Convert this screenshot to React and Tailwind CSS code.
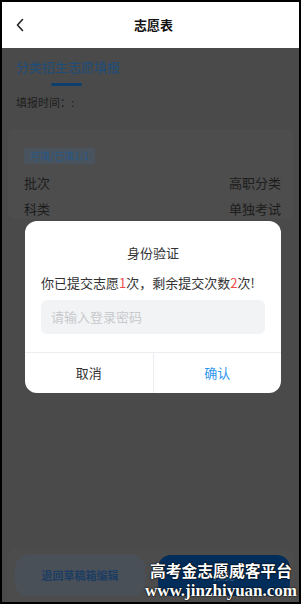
import React from 'react';

const cjk = "font-['Noto_Sans_CJK_SC','Noto_Sans',sans-serif]";

const Header = () => (
  <div className="h-[46px] shrink-0 bg-white flex items-center relative">
    <div className="w-[40px] flex items-center pl-[13px]">
      <svg width="10" height="14" viewBox="0 0 10 14" fill="none">
        <path d="M7.5 1.5 L2.5 7 L7.5 12.5" stroke="#222" strokeWidth="1.6" strokeLinecap="round" strokeLinejoin="round" />
      </svg>
    </div>
    <div className="flex-1 text-center text-[13px] font-bold text-[#111] pr-[34px]">志愿表</div>
  </div>
);

const InfoRow = ({ label, value, className }) => (
  <div className={`flex justify-between text-[13px] leading-[18px] text-[#1c1c1c] ${className || ''}`}>
    <span>{label}</span>
    <span>{value}</span>
  </div>
);

const Dialog = () => (
  <div className="absolute left-[23px] top-[173px] w-[256px] h-[172px] bg-white rounded-[12px] overflow-hidden flex flex-col">
    <div className="pt-[23px] text-center text-[13px] leading-[18px] text-[#323233]">身份验证</div>
    <div className="mt-[12px] px-[16px] text-[13px] leading-[18px] text-[#323233] whitespace-nowrap">
      你已提交志愿<span className="text-[#ee4b4b]">1</span>次，剩余提交次数<span className="text-[#ee4b4b]">2</span>次!
    </div>
    <div className="mt-[8px] mx-[16px] h-[34px] rounded-[6px] bg-[#f2f3f5] flex items-center pl-[10px] text-[13px] text-[#c8c9cc]">
      请输入登录密码
    </div>
    <div className="mt-[18px] border-t border-[#ebedf0] flex flex-1">
      <div className="flex-1 flex items-center justify-center text-[13px] text-[#323233] border-r border-[#ebedf0]">取消</div>
      <div className="flex-1 flex items-center justify-center text-[13px] text-[#2d95ee]">确认</div>
    </div>
  </div>
);

export default function App() {
  return (
    <div className={`w-[301px] h-[604px] bg-black pt-[2px] pl-[2px] pr-[2px] pb-[2px] ${cjk}`}>
      <div className="w-[297px] h-[600px] flex flex-col overflow-hidden">
        <Header />
        <div className="relative flex-1 bg-[#4a4a4a] flex flex-col">
          <div className="pl-[14px] pt-[10px]">
            <div className="text-[13px] leading-[18px] text-[#1d4d7a]">分类招生志愿填报</div>
            <div className="mt-[7px] ml-[35px] w-[31px] h-[3px] bg-[#0c3f6e] rounded-full" />
            <div className="mt-[9px] text-[11px] leading-[14px] text-[#1e1e1e]">填报时间：:</div>
          </div>

          <div className="mx-[6px] mt-[20px] h-[90px] bg-[#4d4d4d] rounded-[6px] pl-[16px] pr-[12px] pt-[12px]">
            <div className="inline-flex h-[16px] items-center px-[6px] bg-[#49535d] text-[10px] text-[#2a5885]">可填/已填1/1</div>
            <InfoRow label="批次" value="高职分类" className="mt-[9px]" />
            <InfoRow label="科类" value="单独考试" className="mt-[8px]" />
          </div>

          <div className="mt-auto mx-[5px] h-[54px] bg-[#4c4c4c] rounded-t-[10px] flex items-center pl-[8px] pt-[1px]">
            <div className="w-[130px] h-[41px] rounded-[13px] bg-[#4a5058] flex items-center justify-center text-[11px] font-bold text-[#1c3d63]">
              退回草稿箱编辑
            </div>
            <div className="ml-[13px] w-[132px] h-[41px] rounded-[13px] bg-[#002d59] flex items-center justify-center text-[11px] text-[#3f5d7c]">
              预览
            </div>
          </div>

          <Dialog />

          <div className="absolute left-[142px] bottom-[2px] w-[154px] flex flex-col items-center text-white [text-shadow:0_0_2px_#000,0_0_1px_#000]">
            <div className="text-[15.8px] leading-[21px] font-bold font-['Liberation_Serif','Noto_Sans_CJK_SC',serif]">高考金志愿威客平台</div>
            <div className="text-[17px] leading-[18px] font-bold font-['Liberation_Serif',serif]">www.jinzhiyuan.com</div>
          </div>
        </div>
      </div>
    </div>
  );
}
